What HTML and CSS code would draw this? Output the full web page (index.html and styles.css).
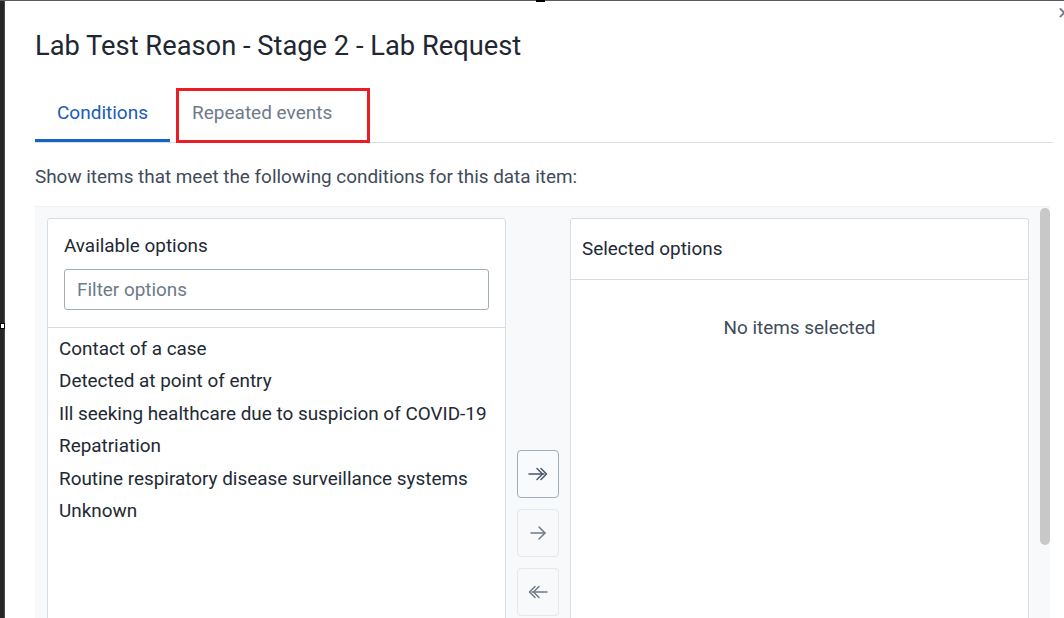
FILE: index.html
```html
<!DOCTYPE html>
<html>
<head>
<meta charset="utf-8">
<link rel="stylesheet" href="styles.css">
</head>
<body>
<div class="backdrop">
  <span class="mark-top"></span>
  <span class="mark-left"></span>
  <div class="modal">
    <span class="close">×</span>
    <h1 class="title">Lab Test Reason - Stage 2 - Lab Request</h1>
    <div class="tabs">
      <div class="tab active">Conditions</div>
      <div class="tab">Repeated events</div>
      <div class="highlight"></div>
    </div>
    <p class="desc">Show items that meet the following conditions for this data item:</p>
    <div class="picker">
      <div class="columns">
        <div class="panel">
          <div class="panel-head">
            <div class="panel-title">Available options</div>
            <div class="filter">Filter options</div>
          </div>
          <ul class="options">
            <li>Contact of a case</li>
            <li>Detected at point of entry</li>
            <li>Ill seeking healthcare due to suspicion of COVID-19</li>
            <li>Repatriation</li>
            <li>Routine respiratory disease surveillance systems</li>
            <li>Unknown</li>
          </ul>
        </div>
        <div class="actions">
          <button class="btn enabled">
            <svg width="24" height="24" viewBox="0 0 24 24" fill="none" stroke="#4a5768" stroke-width="1.5" stroke-linecap="round" stroke-linejoin="round"><path d="M3 12h15"/><path d="M11 6.5l5.5 5.5-5.5 5.5"/><path d="M15 6.5l5.5 5.5-5.5 5.5"/></svg>
          </button>
          <button class="btn">
            <svg width="24" height="24" viewBox="0 0 24 24" fill="none" stroke="#6e7a8a" stroke-width="1.5" stroke-linecap="round" stroke-linejoin="round"><path d="M5 12h14"/><path d="M13 6l6 6-6 6"/></svg>
          </button>
          <button class="btn">
            <svg width="24" height="24" viewBox="0 0 24 24" fill="none" stroke="#6e7a8a" stroke-width="1.5" stroke-linecap="round" stroke-linejoin="round"><path d="M6 12h15"/><path d="M13 6.5l-5.5 5.5 5.5 5.5"/><path d="M9 6.5l-5.5 5.5 5.5 5.5"/></svg>
          </button>
        </div>
        <div class="panel">
          <div class="panel-head sel">
            <div class="panel-title">Selected options</div>
          </div>
          <div class="empty">No items selected</div>
        </div>
      </div>
      <div class="scrollbar"><div class="thumb"></div></div>
    </div>
  </div>
</div>
</body>
</html>
```

FILE: styles.css
```css
* { box-sizing: border-box; }
html, body {
  margin: 0;
  padding: 0;
  height: 100%;
  overflow: hidden;
  background: #2a2a2a;
  font-family: Roboto, "Liberation Sans", sans-serif;
}
.backdrop {
  position: relative;
  height: 100%;
  padding: 1px 0 0 4px;
  background: linear-gradient(to bottom, #5a5a5a 0, #5a5a5a 1px, #262626 1px);
}
.mark-top {
  position: absolute;
  left: 536px;
  top: 0;
  width: 9px;
  height: 2px;
  background: #000;
  z-index: 2;
}
.mark-left {
  position: absolute;
  left: 0;
  top: 323px;
  width: 5px;
  height: 6px;
  background: #fff;
  border: 1px solid #000;
  z-index: 2;
}
.modal {
  position: relative;
  background: #fff;
  height: 100%;
  border-left: 1px solid #4a4a4a;
  padding: 0 0 0 30px;
  overflow: hidden;
}
.close {
  position: absolute;
  right: -6px;
  top: 1px;
  font-size: 22px;
  color: #6e7a8a;
  line-height: 22px;
}
.title {
  margin: 0;
  padding-top: 29px;
  font-size: 27.3px;
  font-weight: 400;
  color: #1f2733;
  line-height: 32px;
}
.tabs {
  position: relative;
  display: flex;
  margin-top: 31px;
  width: 1018px;
  border-bottom: 1px solid #d5dde5;
}
.tab {
  padding: 0 22px;
  height: 49px;
  line-height: 40px;
  font-size: 19px;
  color: #6e7a8a;
  border-bottom: 3px solid transparent;
}
.tab.active {
  color: #1a5bba;
  border-bottom-color: #1565c0;
}
.highlight {
  position: absolute;
  left: 141px;
  top: -5px;
  width: 194px;
  height: 55px;
  border: 3px solid #ec1c24;
}
.desc {
  margin: 23px 0 0;
  font-size: 18.9px;
  line-height: 22px;
  color: #404b5a;
}
.picker {
  display: flex;
  margin-top: 18px;
  width: 1015px;
  height: 430px;
  background: #f8f9fa;
  border-top: 1px solid #eef1f4;
}
.columns {
  display: flex;
  gap: 11px;
  padding: 11px 11px 0 12px;
  flex: 1;
}
.panel {
  width: 459px;
  height: 440px;
  background: #fff;
  border: 1px solid #d5dde5;
  border-radius: 3px;
}
.panel-head {
  padding: 16px 16px 17px 16px;
  border-bottom: 1px solid #d5dde5;
}
.panel-head.sel {
  padding: 19px 11px 19px;
}
.panel-title {
  font-size: 18.9px;
  line-height: 22px;
  color: #212934;
}
.filter {
  margin-top: 12px;
  height: 41px;
  border: 1px solid #a0adba;
  border-radius: 3px;
  padding: 0 12px;
  font-size: 18.9px;
  line-height: 39px;
  color: #6e7a8a;
}
.options {
  list-style: none;
  margin: 0;
  padding: 5px 0 0 11px;
}
.options li {
  height: 32.4px;
  line-height: 32.4px;
  font-size: 18.9px;
  color: #212934;
}
.empty {
  text-align: center;
  padding-top: 37px;
  font-size: 18.9px;
  line-height: 22px;
  color: #404b5a;
}
.actions {
  display: flex;
  flex-direction: column;
  gap: 11px;
  padding-top: 232px;
}
.btn {
  width: 42px;
  height: 48px;
  padding: 0;
  display: flex;
  align-items: center;
  justify-content: center;
  background: #f8f9fa;
  border: 1px solid #e3e8ec;
  border-radius: 4px;
}
.btn.enabled {
  background: #f9fafb;
  border-color: #a0adba;
}
.scrollbar {
  width: 10px;
  margin-right: 2px;
  padding-top: 1px;
}
.thumb {
  width: 10px;
  height: 337px;
  background: #c8c8c8;
  border-radius: 5px;
}
```
